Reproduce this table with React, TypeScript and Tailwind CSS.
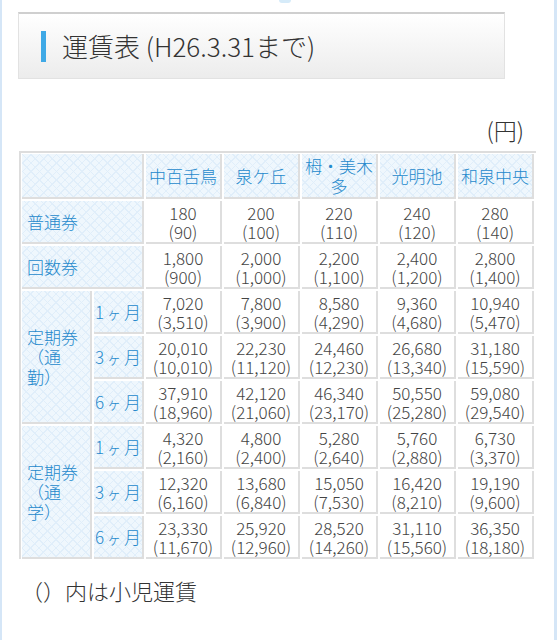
import React from "react";

const LABEL =
  "bg-[#eff7fd] bg-[image:repeating-linear-gradient(45deg,#e0eefa_0px,#e0eefa_1px,transparent_1px,transparent_6px),repeating-linear-gradient(-45deg,#e0eefa_0px,#e0eefa_1px,transparent_1px,transparent_6px)] border-r-2 border-b-2 border-[#dedede] text-[#2489cc]";
const CELL =
  "bg-white border-r-2 border-b-2 border-[#dedede] text-[#444] flex items-center justify-center text-center text-[17px] leading-[19px]";

const stations: React.ReactNode[] = [
  "中百舌鳥",
  "泉ケ丘",
  <>
    栂・美木
    <br />多
  </>,
  "光明池",
  "和泉中央",
];

type Row = [string, string][];

const futsu: Row = [
  ["180", "90"],
  ["200", "100"],
  ["220", "110"],
  ["240", "120"],
  ["280", "140"],
];
const kaisu: Row = [
  ["1,800", "900"],
  ["2,000", "1,000"],
  ["2,200", "1,100"],
  ["2,400", "1,200"],
  ["2,800", "1,400"],
];
const tsukin: Row[] = [
  [
    ["7,020", "3,510"],
    ["7,800", "3,900"],
    ["8,580", "4,290"],
    ["9,360", "4,680"],
    ["10,940", "5,470"],
  ],
  [
    ["20,010", "10,010"],
    ["22,230", "11,120"],
    ["24,460", "12,230"],
    ["26,680", "13,340"],
    ["31,180", "15,590"],
  ],
  [
    ["37,910", "18,960"],
    ["42,120", "21,060"],
    ["46,340", "23,170"],
    ["50,550", "25,280"],
    ["59,080", "29,540"],
  ],
];
const tsugaku: Row[] = [
  [
    ["4,320", "2,160"],
    ["4,800", "2,400"],
    ["5,280", "2,640"],
    ["5,760", "2,880"],
    ["6,730", "3,370"],
  ],
  [
    ["12,320", "6,160"],
    ["13,680", "6,840"],
    ["15,050", "7,530"],
    ["16,420", "8,210"],
    ["19,190", "9,600"],
  ],
  [
    ["23,330", "11,670"],
    ["25,920", "12,960"],
    ["28,520", "14,260"],
    ["31,110", "15,560"],
    ["36,350", "18,180"],
  ],
];
const months = ["1", "3", "6"];

function Cells({ row }: { row: Row }) {
  return (
    <>
      {row.map(([a, b], i) => (
        <div key={i} className={CELL}>
          <div>
            {a}
            <br />({b})
          </div>
        </div>
      ))}
    </>
  );
}

function Month({ m }: { m: string }) {
  return (
    <div className={`${LABEL} flex items-center justify-center text-[17px]`}>
      <span>
        {m}
        <span className="text-[14px] mx-[3px]">ヶ</span>月
      </span>
    </div>
  );
}

function Group({ label, rows }: { label: React.ReactNode; rows: Row[] }) {
  return (
    <>
      <div
        className={`${LABEL} row-span-3 flex items-center pl-[5px] text-[17px] leading-[20px]`}
      >
        <div>{label}</div>
      </div>
      {rows.map((r, i) => (
        <React.Fragment key={i}>
          <Month m={months[i]} />
          <Cells row={r} />
        </React.Fragment>
      ))}
    </>
  );
}

export default function App() {
  return (
    <div
      className="w-[557px] h-[640px] bg-white border-l-2 border-r-[3px] border-[#d5e6f7] overflow-hidden font-light"
      style={{ fontFamily: '"Noto Sans CJK JP", "Noto Sans", sans-serif' }}
    >
      <div className="h-[3px] flex justify-center">
        <div className="w-[12px] h-[3px] rounded-b-full bg-[#d6ebf9] ml-[14px]" />
      </div>
      <div className="ml-[16px] mt-[9px] w-[487px] h-[67px] border-t-2 border-t-[#cfcfcf] border-x border-b border-[#e2e2e2] bg-gradient-to-b from-white to-[#ececec] flex items-center pl-[22px]">
        <div className="w-[5px] h-[31px] bg-[#3fa9e6]" />
        <div className="ml-[16px] text-[26px] text-[#333] leading-none">
          運賃表 (H26.3.31まで)
        </div>
      </div>
      <div className="mt-[36px] mr-[30px] text-right text-[23px] leading-[30px] text-[#333]">
        (円)
      </div>
      <div className="ml-[17px] mt-[6px] w-[517px] border-t-2 border-l-2 border-[#dddddd] pt-[1px] pl-[1px]">
        <div className="grid grid-cols-[70px_50px_repeat(5,76px)] grid-rows-[45px_repeat(8,43px)] gap-[2px]">
          <div className={`${LABEL} col-span-2`} />
          {stations.map((s, i) => (
            <div
              key={i}
              className={`${LABEL} flex items-center justify-center text-center text-[17px] leading-[20px]`}
            >
              <div>{s}</div>
            </div>
          ))}
          <div className={`${LABEL} col-span-2 flex items-center pl-[5px] text-[17px]`}>
            普通券
          </div>
          <Cells row={futsu} />
          <div className={`${LABEL} col-span-2 flex items-center pl-[5px] text-[17px]`}>
            回数券
          </div>
          <Cells row={kaisu} />
          <Group
            label={
              <>
                定期券
                <br />
                （通
                <br />
                勤）
              </>
            }
            rows={tsukin}
          />
          <Group
            label={
              <>
                定期券
                <br />
                （通
                <br />
                学）
              </>
            }
            rows={tsugaku}
          />
        </div>
      </div>
      <div className="ml-[19px] mt-[16px] text-[22px] leading-[30px] text-[#333]">
        （）内は小児運賃
      </div>
    </div>
  );
}
